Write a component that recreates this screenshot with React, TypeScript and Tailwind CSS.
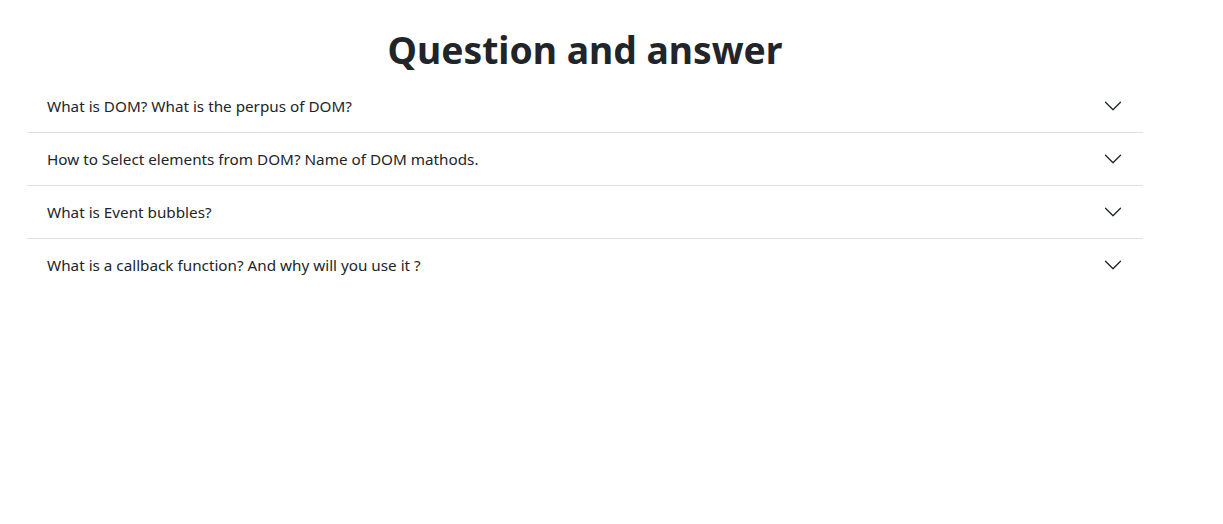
import { FC } from "react";

const questions = [
    "What is DOM? What is the perpus of DOM?",
    "How to Select elements from DOM? Name of DOM mathods.",
    "What is Event bubbles?",
    "What is a callback function? And why will you use it ?",
];

const Chevron: FC = () => (
    <svg width="20" height="20" viewBox="0 0 16 16" fill="#212529" className="shrink-0">
        <path
            fillRule="evenodd"
            d="M1.646 4.646a.5.5 0 0 1 .708 0L8 10.293l5.646-5.647a.5.5 0 0 1 .708.708l-6 6a.5.5 0 0 1-.708 0l-6-6a.5.5 0 0 1 0-.708z"
        />
    </svg>
);

const App: FC = () => {
    return (
        <div className="bg-white min-h-[524px] text-[#212529] font-['Noto_Sans',sans-serif]">
            <div className="ml-[27px] w-[1116px]">
                <h1 className="pt-[22px] mb-[3px] text-center text-[37.25px] font-bold leading-[55px]">
                    Question and answer
                </h1>

                <div className="flex flex-col">
                    {questions.map((q, i) => (
                        <button
                            key={i}
                            className={`flex items-center justify-between px-5 py-[14px] text-left text-[15.25px] leading-6 ${
                                i < questions.length - 1 ? "border-b border-[#dee2e6]" : ""
                            }`}
                        >
                            <span>{q}</span>
                            <Chevron />
                        </button>
                    ))}
                </div>
            </div>
        </div>
    );
};

export default App;
